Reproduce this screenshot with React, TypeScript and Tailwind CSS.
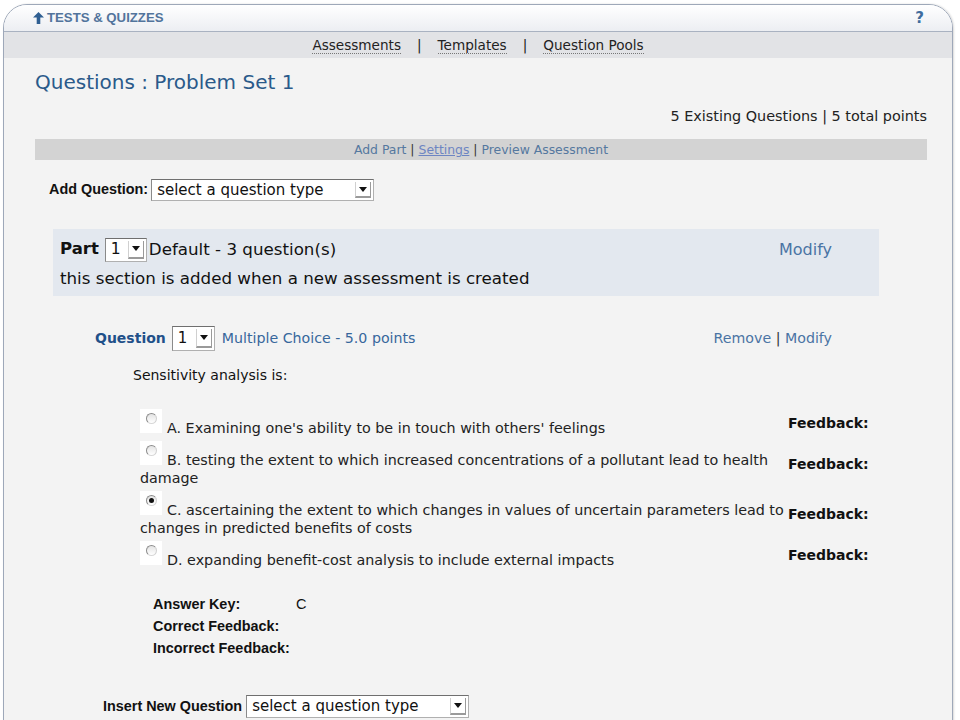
import React from 'react';

const sans = "font-['DejaVu_Sans',Verdana,sans-serif]";
const helv = "font-['Liberation_Sans',Arial,sans-serif]";

const SelectBox = ({ value, width, height = 22, textSize = 'text-[15px]' }: { value: string; width: number; height?: number; textSize?: string }) => (
  <div
    className="flex items-stretch bg-white border border-[#b0b0b0] border-t-[#6f6f6f] border-l-[#8a8a8a]"
    style={{ width, height }}
  >
    <span className={`flex-1 flex items-center pl-[5px] text-[#111] ${textSize} ${sans}`}>{value}</span>
    <span className="w-[16px] my-[2px] mr-[2px] flex items-center justify-center bg-white border-l border-[#d0d0d0] border-b-2 border-b-[#9a9a9a] border-r border-r-[#9a9a9a]">
      <svg width="8" height="5" viewBox="0 0 8 5"><path d="M0 0h8L4 5z" fill="#111" /></svg>
    </span>
  </div>
);

const Radio = ({ checked }: { checked?: boolean }) => (
  <span className="inline-block align-baseline w-[22px] h-[24px] bg-white relative mr-[5px]">
    <span className="absolute left-[6px] top-[4px] w-[11px] h-[11px] rounded-full border border-[#8c8c8c] border-b-[#d8d8d8] border-r-[#d0d0d0] bg-gradient-to-b from-[#e4e4e4] to-white flex items-center justify-center">
      {checked && <span className="w-[5px] h-[5px] rounded-full bg-[#111]" />}
    </span>
  </span>
);

const answers = [
  { text: "A. Examining one's ability to be in touch with others' feelings" },
  { text: 'B. testing the extent to which increased concentrations of a pollutant lead to health damage' },
  { text: 'C. ascertaining the extent to which changes in values of uncertain parameters lead to changes in predicted benefits of costs', checked: true },
  { text: 'D. expanding benefit-cost analysis to include external impacts' },
];

export default function App() {
  return (
    <div className="w-[960px] h-[720px] bg-white overflow-hidden pl-[3px] pr-[7px] pt-[4px]">
      <div className="h-[760px] flex flex-col border border-[#9ea8b9] rounded-t-[24px] overflow-hidden shadow-[1px_0_2px_rgba(0,0,0,0.15)]">
        {/* Tool title bar */}
        <div className="h-[26px] shrink-0 bg-gradient-to-b from-white to-[#eceef2] flex items-center justify-between pl-[29px] pr-[28px]">
          <div className={`flex items-center gap-[3px] text-[13.2px] font-bold text-[#52749c] ${helv}`}>
            <svg width="11" height="12" viewBox="0 0 11 12">
              <path d="M5.5 0L11 5.5H7.3V12H3.7V5.5H0z" fill="#2f5f92" />
            </svg>
            <span>TESTS &amp; QUIZZES</span>
          </div>
          <span className={`text-[15px] font-bold text-[#3f6d9e] ${sans}`}>?</span>
        </div>

        {/* Nav */}
        <div className={`h-[27px] shrink-0 bg-[#e2e3e6] border-t border-[#a9b2c1] flex items-center justify-center gap-[16px] text-[13.6px] text-[#222] ${sans}`}>
          <span className="border-b border-dotted border-[#777] leading-[16px]">Assessments</span>
          <span>|</span>
          <span className="border-b border-dotted border-[#777] leading-[16px]">Templates</span>
          <span>|</span>
          <span className="border-b border-dotted border-[#777] leading-[16px]">Question Pools</span>
        </div>

        {/* Content */}
        <div className={`flex-1 bg-[#f3f3f3] pl-[31px] pr-[25px] ${sans}`}>
          <h1 className="mt-[12px] text-[20px] leading-[24px] text-[#2a5a8a]">Questions : Problem Set 1</h1>

          <div className="mt-[12px] text-right text-[14.4px] leading-[20px] text-[#222]">5 Existing Questions | 5 total points</div>

          <div className="mt-[13px] h-[21px] bg-[#d3d3d3] flex items-center justify-center gap-[4px] pt-[2px] text-[12.4px] text-[#55789f]">
            <span>Add Part</span>
            <span className="text-[#333]">|</span>
            <span className="underline text-[#6d85c2]">Settings</span>
            <span className="text-[#333]">|</span>
            <span>Preview Assessment</span>
          </div>

          <div className="mt-[19px] ml-[14px] flex items-center gap-[3px]">
            <span className={`text-[14.4px] font-bold text-[#111] ${helv}`}>Add Question:</span>
            <SelectBox value="select a question type" width={223} />
          </div>

          {/* Part */}
          <div className="mt-[28px] ml-[18px] w-[826px] h-[67px] bg-[#e3e8ef] pl-[7px] pr-[47px] pt-[8px]">
            <div className="flex items-center">
              <span className="text-[16.5px] font-bold text-[#111] mr-[6px]">Part</span>
              <SelectBox value="1" width={42} height={24} textSize="text-[15.5px]" />
              <span className="text-[16.7px] text-[#111] ml-[2px]">Default - 3 question(s)</span>
              <span className="ml-auto text-[16px] text-[#4a74a4]">Modify</span>
            </div>
            <div className="mt-[5px] text-[16.7px] leading-[22px] text-[#111]">this section is added when a new assessment is created</div>
          </div>

          {/* Question */}
          <div className="mt-[30px] ml-[60px] w-[737px]">
            <div className="flex items-center">
              <span className="text-[14px] font-bold text-[#1f5089] mr-[6px]">Question</span>
              <SelectBox value="1" width={43} height={25} textSize="text-[15px]" />
              <span className="ml-[7px] text-[14.2px] text-[#37679c]">Multiple Choice - 5.0 points</span>
              <span className="ml-auto text-[14.2px] text-[#4a74a4]">Remove <span className="text-[#333]">|</span> Modify</span>
            </div>
            <div className="mt-[14px] ml-[38px] text-[14px] leading-[20px] text-[#111]">Sensitivity analysis is:</div>
          </div>

          <div className="mt-[24px] ml-[105px] flex flex-col gap-[4px]">
            {answers.map((a, i) => (
              <div key={i} className="flex items-center">
                <div className="w-[648px] text-[14.3px] leading-[18px] text-[#222]">
                  <Radio checked={a.checked} />
                  {a.text}
                </div>
                <span className="text-[14px] font-bold text-[#111]">Feedback:</span>
              </div>
            ))}
          </div>

          <div className={`mt-[26px] ml-[118px] grid grid-cols-[143px_auto] gap-y-[3px] text-[14.4px] leading-[19px] text-[#111] ${helv}`}>
            <span className="font-bold">Answer Key:</span>
            <span className="text-[14.5px]">C</span>
            <span className="font-bold col-span-2">Correct Feedback:</span>
            <span className="font-bold col-span-2">Incorrect Feedback:</span>
          </div>

          <div className="mt-[37px] ml-[68px] flex items-center gap-[4px]">
            <span className={`text-[14.4px] font-bold text-[#111] ${helv}`}>Insert New Question</span>
            <SelectBox value="select a question type" width={223} height={23} />
          </div>
        </div>
      </div>
    </div>
  );
}
